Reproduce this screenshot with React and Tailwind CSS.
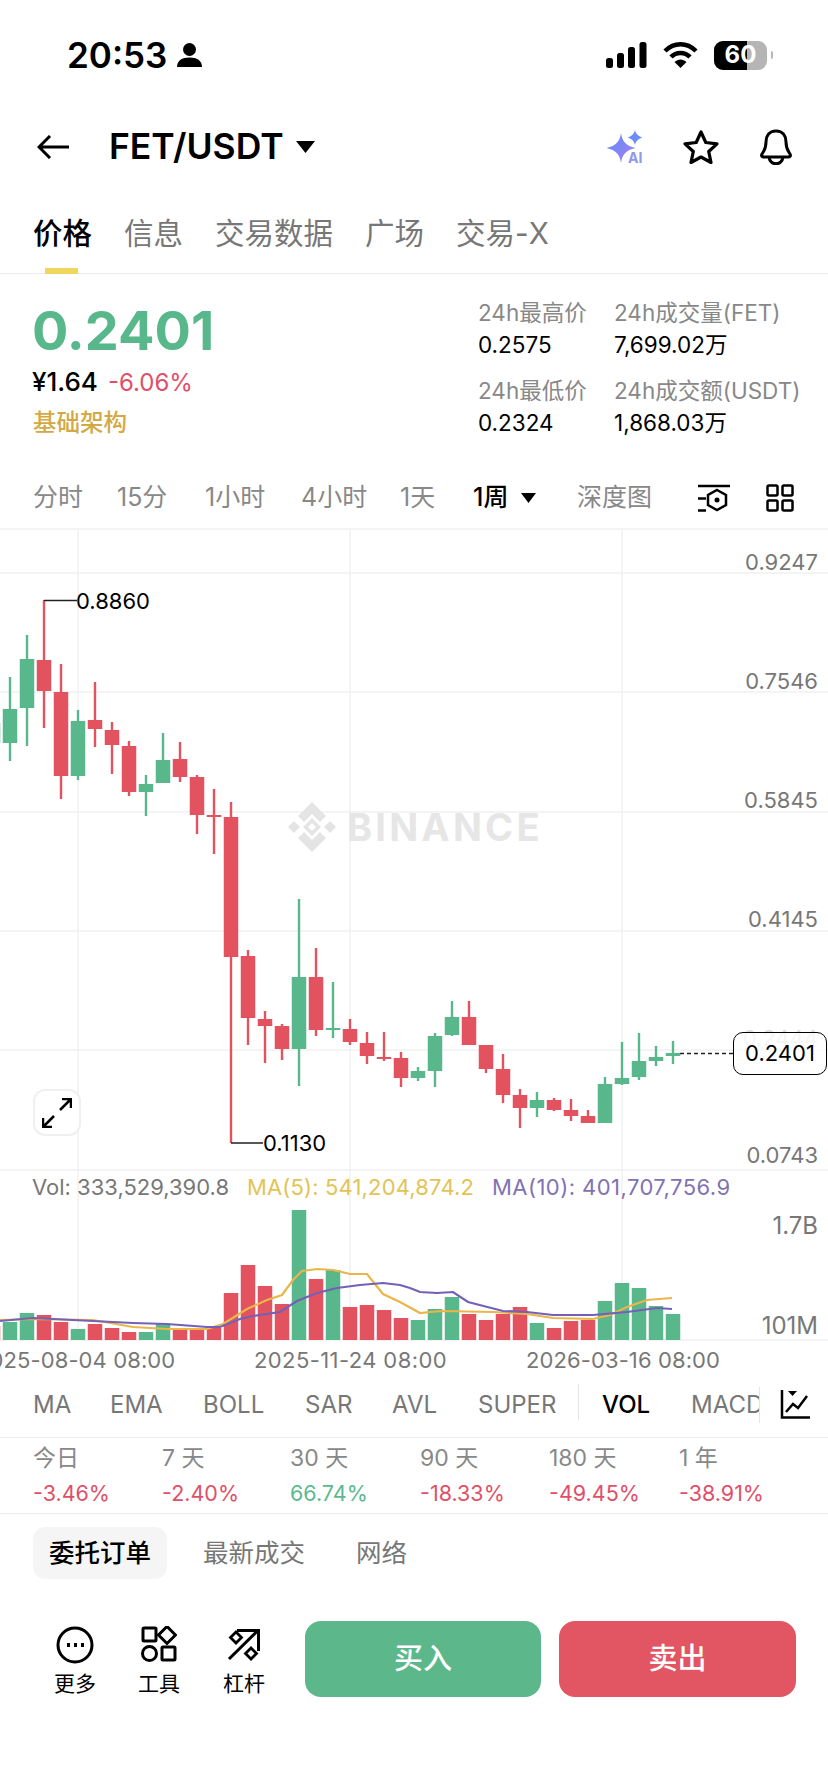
import React from 'react';

const UP = '#58b78b';
const DOWN = '#e2525f';

// x, wickTop, wickBottom, bodyTop, bodyBottom, up
const candles = [
  [-7, 700, 760, 723, 743, 1],
  [10, 677, 761, 709, 743, 1],
  [27, 635, 746, 659, 708, 1],
  [44, 600, 728, 660, 691, 0],
  [61, 664, 799, 692, 776, 0],
  [78, 710, 780, 721, 776, 1],
  [95, 682, 747, 720, 729, 0],
  [112, 722, 774, 730, 745, 0],
  [129, 741, 796, 746, 792, 0],
  [146, 775, 816, 784, 792, 1],
  [163, 733, 783, 760, 783, 1],
  [180, 742, 782, 759, 777, 0],
  [197, 775, 834, 777, 815, 0],
  [214, 789, 854, 815, 817, 0],
  [231, 802, 1143, 817, 957, 0],
  [248, 950, 1045, 956, 1018, 0],
  [265, 1011, 1063, 1019, 1026, 0],
  [282, 1024, 1060, 1026, 1049, 0],
  [299, 899, 1086, 977, 1049, 1],
  [316, 948, 1036, 977, 1030, 0],
  [333, 982, 1038, 1028, 1030, 1],
  [350, 1019, 1045, 1029, 1042, 0],
  [367, 1032, 1064, 1043, 1056, 0],
  [384, 1032, 1061, 1057, 1059, 0],
  [401, 1052, 1087, 1058, 1078, 0],
  [418, 1067, 1081, 1071, 1078, 1],
  [435, 1033, 1087, 1036, 1071, 1],
  [452, 1001, 1036, 1017, 1035, 1],
  [469, 1001, 1045, 1017, 1045, 0],
  [486, 1045, 1073, 1045, 1069, 0],
  [503, 1054, 1103, 1069, 1095, 0],
  [520, 1089, 1128, 1095, 1108, 0],
  [537, 1092, 1117, 1100, 1108, 1],
  [554, 1098, 1111, 1100, 1110, 0],
  [571, 1099, 1121, 1110, 1116, 0],
  [588, 1110, 1123, 1116, 1123, 0],
  [605, 1077, 1123, 1084, 1123, 1],
  [622, 1042, 1085, 1078, 1084, 1],
  [639, 1033, 1080, 1061, 1077, 1],
  [656, 1046, 1066, 1057, 1061, 1],
  [673, 1041, 1064, 1053, 1056, 1],
];

// x, top, up
const volumes = [
  [-7, 1326, 0], [10, 1322, 1], [27, 1313, 1], [44, 1315, 0], [61, 1322, 0], [78, 1329, 1],
  [95, 1324, 0], [112, 1328, 0], [129, 1332, 0], [146, 1332, 1], [163, 1324, 1], [180, 1329, 0],
  [197, 1330, 0], [214, 1328, 0], [231, 1293, 0], [248, 1265, 0], [265, 1286, 0], [282, 1304, 0],
  [299, 1210, 1], [316, 1279, 0], [333, 1270, 1], [350, 1307, 0], [367, 1305, 0], [384, 1310, 0],
  [401, 1318, 0], [418, 1320, 1], [435, 1309, 1], [452, 1297, 1], [469, 1314, 0], [486, 1320, 0],
  [503, 1314, 0], [520, 1307, 0], [537, 1323, 1], [554, 1328, 0], [571, 1321, 0], [588, 1320, 0],
  [605, 1301, 1], [622, 1283, 1], [639, 1288, 1], [656, 1306, 1], [673, 1314, 1],
];

const ma5 = '0,1320 33,1319 93,1320 133,1327 167,1329 207,1329 223,1324 247,1309 267,1300 282,1295 293,1280 302,1271 317,1269 333,1270 350,1274 367,1274 383,1294 400,1302 420,1313 430,1312 443,1311 493,1312 527,1314 553,1318 593,1319 610,1315 627,1307 647,1300 672,1298';
const ma10 = '0,1321 33,1318 93,1321 133,1323 167,1324 207,1327 220,1327 240,1319 253,1316 280,1312 297,1301 317,1293 337,1288 360,1285 383,1283 400,1285 410,1288 420,1292 437,1293 453,1292 468,1302 503,1311 527,1312 553,1315 593,1315 627,1312 657,1308 672,1309';

const intervals = ['分时', '15分', '1小时', '4小时', '1天'];
const indicators = ['MA', 'EMA', 'BOLL', 'SAR', 'AVL', 'SUPER'];
const periods = [
  ['今日', '-3.46%', 0],
  ['7 天', '-2.40%', 0],
  ['30 天', '66.74%', 1],
  ['90 天', '-18.33%', 0],
  ['180 天', '-49.45%', 0],
  ['1 年', '-38.91%', 0],
];

const Chart = () => (
  <svg viewBox="0 528 828 856" className="absolute inset-0 w-[828px] h-[856px]">
    <g stroke="#f1f1f1" strokeWidth="1.5">
      {[529, 573, 692, 812, 931, 1050, 1170, 1340].map((y) => (
        <line key={y} x1="0" x2="828" y1={y} y2={y} />
      ))}
      {[78, 350, 622].map((x) => (
        <line key={x} x1={x} x2={x} y1="528" y2="1340" />
      ))}
    </g>
    {volumes.map(([x, top, up]) => (
      <rect key={x} x={x - 7.25} y={top} width="14.5" height={1340 - top} fill={up ? UP : DOWN} />
    ))}
    <polyline points={ma5} fill="none" stroke="#eab64a" strokeWidth="2.2" />
    <polyline points={ma10} fill="none" stroke="#7560b8" strokeWidth="2.2" />
    {candles.map(([x, wt, wb, bt, bb, up]) => (
      <g key={x} fill={up ? UP : DOWN}>
        <rect x={x - 1.2} y={wt} width="2.4" height={wb - wt} />
        <rect x={x - 7.25} y={bt} width="14.5" height={bb - bt} />
      </g>
    ))}
    <path d="M44 600.5H77M231 1143H263" stroke="#222" strokeWidth="1.5" fill="none" />
    <path d="M680 1053.5H733" stroke="#222" strokeWidth="1.5" strokeDasharray="4 3" fill="none" />
  </svg>
);

const BinanceMark = () => (
  <svg viewBox="0 0 50 50" className="w-[50px] h-[50px]" fill="#e4e4e4" fillRule="evenodd">
    <path d="M25 0 39 14 33 20 25 12 17 20 11 14Z" />
    <path d="M25 50 11 36 17 30 25 38 33 30 39 36Z" />
    <path d="M1 25 7 19 13 25 7 31Z" />
    <path d="M37 25 43 19 49 25 43 31Z" />
    <path d="M25 16 34 25 25 34 16 25ZM25 21 21 25 25 29 29 25Z" />
  </svg>
);

const App = () => (
  <div className="w-[828px] h-[1792px] bg-white overflow-hidden text-black font-['Inter','Noto_Sans_CJK_SC',sans-serif]">
    {/* status bar */}
    <div className="h-[110px] flex items-center pl-[67px]">
      <span className="text-[35px] font-semibold leading-none w-[110px]">20:53</span>
      <svg viewBox="0 0 25 24" className="w-[25px] h-[24px]">
        <circle cx="12.5" cy="6.5" r="6.5" />
        <path d="M0 24c0-6.5 5-9.5 12.5-9.5S25 17.5 25 24Z" />
      </svg>
      <svg viewBox="0 0 41 26" className="w-[41px] h-[26px] ml-[404px]">
        <rect x="0" y="16" width="7" height="10" rx="2.500" />
        <rect x="11" y="11" width="7" height="15" rx="2.500" />
        <rect x="22" y="5" width="7" height="21" rx="2.500" />
        <rect x="33.500" y="0" width="7" height="26" rx="2.500" />
      </svg>
      <svg viewBox="0 0 35 26" className="w-[35px] h-[26px] ml-[16px]" fill="none" stroke="#000" strokeWidth="4.5">
        <path d="M2 9C11 0 24 0 33 9" />
        <path d="M8 15C13 9.500 22 9.500 27 15" />
        <path d="M17.500 26 11.500 20C15 16.500 20 16.500 23.500 20Z" fill="#000" stroke="none" />
      </svg>
      <div className="ml-[16px] relative w-[53px] h-[29px] rounded-[9px] bg-[#b5b5b5] overflow-hidden">
        <div className="absolute left-0 top-0 h-full w-[33px] bg-black" />
        <span className="absolute inset-0 flex items-center justify-center text-white text-[24px] font-bold leading-none">60</span>
      </div>
      <div className="ml-[4px] w-[2px] h-[8px] rounded-r bg-[#b5b5b5]" />
    </div>

    {/* nav */}
    <div className="h-[74px] flex items-center pl-[37px]">
      <svg viewBox="0 0 32 24" className="w-[32px] h-[24px]" fill="none" stroke="#000" strokeWidth="3">
        <path d="M32 12H2M13 1 2 12l11 11" />
      </svg>
      <span className="ml-[40px] text-[35.500px] font-semibold leading-none w-[187px] whitespace-nowrap">FET/USDT</span>
      <svg viewBox="0 0 19 12" className="w-[19px] h-[12px]"><path d="M0 0h19L9.500 12Z" /></svg>
      <svg viewBox="0 0 40 34" className="w-[40px] h-[34px] ml-[291px]">
        <defs>
          <linearGradient id="ai" x1="0" y1="0" x2="1" y2="1">
            <stop offset="0" stopColor="#5f8dfb" />
            <stop offset="1" stopColor="#a67ff0" />
          </linearGradient>
        </defs>
        <path d="M15 3C16 11 20 16 29.500 18C20 20 16 25 15 33C14 25 10 20 0.500 18C10 16 14 11 15 3Z" fill="url(#ai)" />
        <path d="M29 0C30 4 32 6 36.500 7.500C32 9 30 11 29 15C28 11 26 9 21.500 7.500C26 6 28 4 29 0Z" fill="#6d8cf5" />
        <text x="22" y="33" fontSize="14" fontWeight="700" fill="#8f98ef" fontFamily="Inter">AI</text>
      </svg>
      <svg viewBox="0 0 36 34" className="w-[36px] h-[34px] ml-[37px]" fill="none" stroke="#000" strokeWidth="3.200" strokeLinejoin="round">
        <path d="M18 2l4.800 10.500 11.200 1.300-8.300 7.700 2.300 11L18 27l-10 5.500 2.300-11L2 13.800l11.200-1.300Z" />
      </svg>
      <svg viewBox="0 0 34 36" className="w-[34px] h-[36px] ml-[40px]" fill="none" stroke="#000" strokeWidth="3" strokeLinejoin="round">
        <path d="M17 2C10 2 7 7 7 13c0 7-2 9-4 12-1 2 0 3 2 3h24c2 0 3-1 2-3-2-3-4-5-4-12 0-6-3-11-10-11Z" />
        <path d="M10 28c1 9 13 9 14 0" />
      </svg>
    </div>

    {/* tabs */}
    <div className="h-[90px] flex items-start pl-[33px] gap-[32px] border-b border-[#ededed] pt-[30px] text-[29.500px] leading-[38px] text-[#777]">
      <div className="relative text-black font-medium">
        价格
        <div className="absolute left-[12px] top-[54px] w-[33px] h-[6px] bg-[#f0d65e]" />
      </div>
      <div>信息</div>
      <div>交易数据</div>
      <div>广场</div>
      <div>交易-X</div>
    </div>

    {/* price */}
    <div className="h-[192px] flex pl-[33px]">
      <div className="w-[445px] pt-[27px]">
        <div className="text-[54px] font-bold leading-[60px] text-[#58b78b] -ml-[1px]">0.2401</div>
        <div className="mt-[6px] flex items-baseline gap-[10px] leading-[30px] -ml-[1px]">
          <span className="font-medium text-[26px]">¥1.64</span>
          <span className="text-[24px] text-[#df5068]">-6.06%</span>
        </div>
        <div className="mt-[10px] text-[23.500px] leading-[30px] text-[#d3a945] font-medium">基础架构</div>
      </div>
      <div className="pt-[24px] grid grid-cols-[136px_auto] content-start text-[22.500px] leading-[30px] whitespace-nowrap">
        <div className="text-[#888]">24h最高价</div>
        <div className="text-[#888]">24h成交量(FET)</div>
        <div className="mt-[2px] mb-[16px]">0.2575</div>
        <div className="mt-[2px] mb-[16px]">7,699.02万</div>
        <div className="text-[#888]">24h最低价</div>
        <div className="text-[#888]">24h成交额(USDT)</div>
        <div className="mt-[2px]">0.2324</div>
        <div className="mt-[2px]">1,868.03万</div>
      </div>
    </div>

    {/* intervals */}
    <div className="h-[62px] pl-[33px] pt-[1px] grid grid-cols-[84px_88px_96px_99px_73px_104px_121px_68px_auto] items-center text-[25px] text-[#888] whitespace-nowrap">
      {intervals.map((t) => <div key={t}>{t}</div>)}
      <div className="flex items-center gap-[13px] text-black font-medium">
        1周
        <svg viewBox="0 0 15 10" className="w-[15px] h-[10px]"><path d="M0 0h15L7.500 10Z" /></svg>
      </div>
      <div>深度图</div>
      <svg viewBox="0 0 32 28" className="w-[32px] h-[28px]" fill="none" stroke="#000" strokeWidth="2.500">
        <path d="M0 2h32M0 14.500h8M0 26.500h8" />
        <path d="M19 6l9 5v10l-9 5-9-5V11Z" />
        <circle cx="19" cy="16" r="2.500" fill="#000" stroke="none" />
      </svg>
      <svg viewBox="0 0 28 28" className="w-[28px] h-[28px]" fill="none" stroke="#000" strokeWidth="2.500">
        <rect x="1.500" y="1.500" width="10" height="10" rx="1.500" />
        <rect x="16.500" y="1.500" width="10" height="10" rx="1.500" />
        <rect x="1.500" y="16.500" width="10" height="10" rx="1.500" />
        <rect x="16.500" y="16.500" width="10" height="10" rx="1.500" />
      </svg>
    </div>

    {/* chart */}
    <div className="relative h-[856px] overflow-hidden">
      <Chart />
      <div className="absolute left-[287px] top-[274px] flex items-center gap-[10px]">
        <BinanceMark />
        <span className="text-[38px] font-bold leading-none text-[#e6e6e6] tracking-[3.200px]">BINANCE</span>
      </div>

      <span className="absolute right-[10px] top-[20px] text-[22px] leading-[28px] text-[#777]">0.9247</span>
      <span className="absolute right-[10px] top-[139px] text-[22px] leading-[28px] text-[#777]">0.7546</span>
      <span className="absolute right-[10px] top-[258px] text-[22px] leading-[28px] text-[#777]">0.5845</span>
      <span className="absolute right-[10px] top-[377px] text-[22px] leading-[28px] text-[#777]">0.4145</span>
      <span className="absolute right-[10px] top-[496px] text-[22px] leading-[28px] text-[#ddd]">0.2444</span>
      <span className="absolute right-[10px] top-[613px] text-[22px] leading-[28px] text-[#777]">0.0743</span>

      <span className="absolute left-[76px] top-[59px] text-[22px] leading-[28px]">0.8860</span>
      <span className="absolute left-[263px] top-[601px] text-[22px] leading-[28px]">0.1130</span>

      <div className="absolute left-[733px] top-[504px] w-[94px] h-[43px] rounded-[10px] border border-black bg-white/70 flex items-center justify-center text-[22px]">0.2401</div>

      <div className="absolute left-[33px] top-[561px] w-[48px] h-[47px] rounded-[12px] border-2 border-[#f0f0f0] bg-white flex items-center justify-center">
        <svg viewBox="0 0 30 30" className="w-[30px] h-[30px]" fill="none" stroke="#000" strokeWidth="2.500">
          <path d="M18 12 29 1M20 1h9v9M12 18 1 29M1 20v9h9" />
        </svg>
      </div>

      <div className="absolute left-[32px] top-[645px] flex text-[22px] leading-[28px] whitespace-nowrap">
        <span className="w-[215px] text-[#777]">Vol: 333,529,390.8</span>
        <span className="w-[245px] text-[#e3c355] tracking-[0.150px]">MA(5): 541,204,874.2</span>
        <span className="text-[#8172b3] tracking-[0.450px]">MA(10): 401,707,756.9</span>
      </div>

      <span className="absolute right-[10px] top-[684px] text-[24px] leading-[28px] text-[#777]">1.7B</span>
      <span className="absolute right-[10px] top-[784px] text-[24px] leading-[28px] text-[#777]">101M</span>

      <span className="absolute left-[-24px] top-[818px] text-[22px] leading-[28px] tracking-[0.100px] text-[#777] whitespace-nowrap">2025-08-04 08:00</span>
      <span className="absolute left-[254px] top-[818px] text-[22px] leading-[28px] tracking-[0.400px] text-[#777] whitespace-nowrap">2025-11-24 08:00</span>
      <span className="absolute left-[526px] top-[818px] text-[22px] leading-[28px] tracking-[0.100px] text-[#777] whitespace-nowrap">2026-03-16 08:00</span>
    </div>

    {/* indicators */}
    <div className="h-[54px] pl-[33px] pb-[12px] grid grid-cols-[77px_93px_102px_87px_86px_124px_89px_89px_auto] items-center border-b border-[#ededed] text-[24px] text-[#777] whitespace-nowrap">
      {indicators.map((t) => <div key={t}>{t}</div>)}
      <div className="relative text-black font-medium">
        <div className="absolute left-[-24px] top-[-3px] w-px h-[36px] bg-[#e5e5e5]" />
        VOL
      </div>
      <div className="w-[69px] overflow-hidden border-r border-[#e5e5e5]">MACD</div>
      <svg viewBox="0 0 30 29" className="w-[30px] h-[29px]" fill="none" stroke="#000" strokeWidth="2.500">
        <path d="M2 0v27.500h28" />
        <path d="M6 22l7-8 5 4 9-12" />
        <path d="M8 1h9l-4.500 5Z" fill="#000" stroke="none" />
      </svg>
    </div>

    {/* periods */}
    <div className="h-[76px] pl-[33px] grid grid-cols-[129px_128px_130px_129px_130px_auto] border-b border-[#ededed] pt-[6px] whitespace-nowrap">
      {periods.map(([label, value, up]) => (
        <div key={label} className="text-[21.500px] leading-[28px]">
          <div className="text-[#888] text-[23px]">{label}</div>
          <div className={up ? 'mt-[7px] text-[#5cb88e]' : 'mt-[7px] text-[#df5068]'}>{value}</div>
        </div>
      ))}
    </div>

    {/* order tabs */}
    <div className="pl-[33px] pt-[13px] flex items-center text-[25.500px] text-[#777] whitespace-nowrap">
      <div className="w-[134px] h-[52px] rounded-[12px] bg-[#f5f5f5] flex items-center justify-center text-black font-medium">委托订单</div>
      <div className="ml-[36px]">最新成交</div>
      <div className="ml-[51px]">网络</div>
    </div>

    {/* bottom bar */}
    <div className="pt-[42px] pl-[33px] flex items-start">
      <div className="w-[272px] grid grid-cols-3 pl-[11px] text-[21px] leading-[26px] text-center">
        <div className="w-[62px] flex flex-col items-center pt-[5px]">
          <svg viewBox="0 0 38 38" className="w-[38px] h-[38px]" fill="none" stroke="#000" strokeWidth="3">
            <circle cx="19" cy="19" r="17" />
            <path d="M11 19h3M18 19h3M25 19h3" strokeWidth="4" />
          </svg>
          <span className="mt-[7px]">更多</span>
        </div>
        <div className="w-[62px] -ml-[3px] flex flex-col items-center pt-[5px]">
          <svg viewBox="0 0 36 36" className="w-[36px] h-[36px]" fill="none" stroke="#000" strokeWidth="3">
            <rect x="2" y="2" width="13" height="13" rx="1" />
            <path d="M26 0.500l8.500 8.500-8.500 8.500-8.500-8.500Z" />
            <circle cx="8.500" cy="27.500" r="7" />
            <rect x="21" y="21" width="13" height="13" rx="1" />
          </svg>
          <span className="mt-[9px]">工具</span>
        </div>
        <div className="w-[62px] -ml-[5px] flex flex-col items-center pt-[5px]">
          <svg viewBox="0 0 34 36" className="w-[34px] h-[36px]" fill="none" stroke="#000" strokeWidth="3">
            <path d="M2 33 31 4.500M10 4.500h21.500V25" />
            <path d="M9 6l5.500 5.500L9 17l-5.500-5.500Z" strokeWidth="2.800" />
            <path d="M24 22l5.500 5.500L24 33l-5.500-5.500Z" strokeWidth="2.800" />
          </svg>
          <span className="mt-[9px]">杠杆</span>
        </div>
      </div>
      <div className="w-[236px] h-[76px] rounded-[16px] bg-[#5cb88a] flex items-center justify-center text-[29px] font-medium text-white">买入</div>
      <div className="ml-[18px] w-[237px] h-[76px] rounded-[16px] bg-[#e25563] flex items-center justify-center text-[29px] font-medium text-white">卖出</div>
    </div>
  </div>
);

export default App;
